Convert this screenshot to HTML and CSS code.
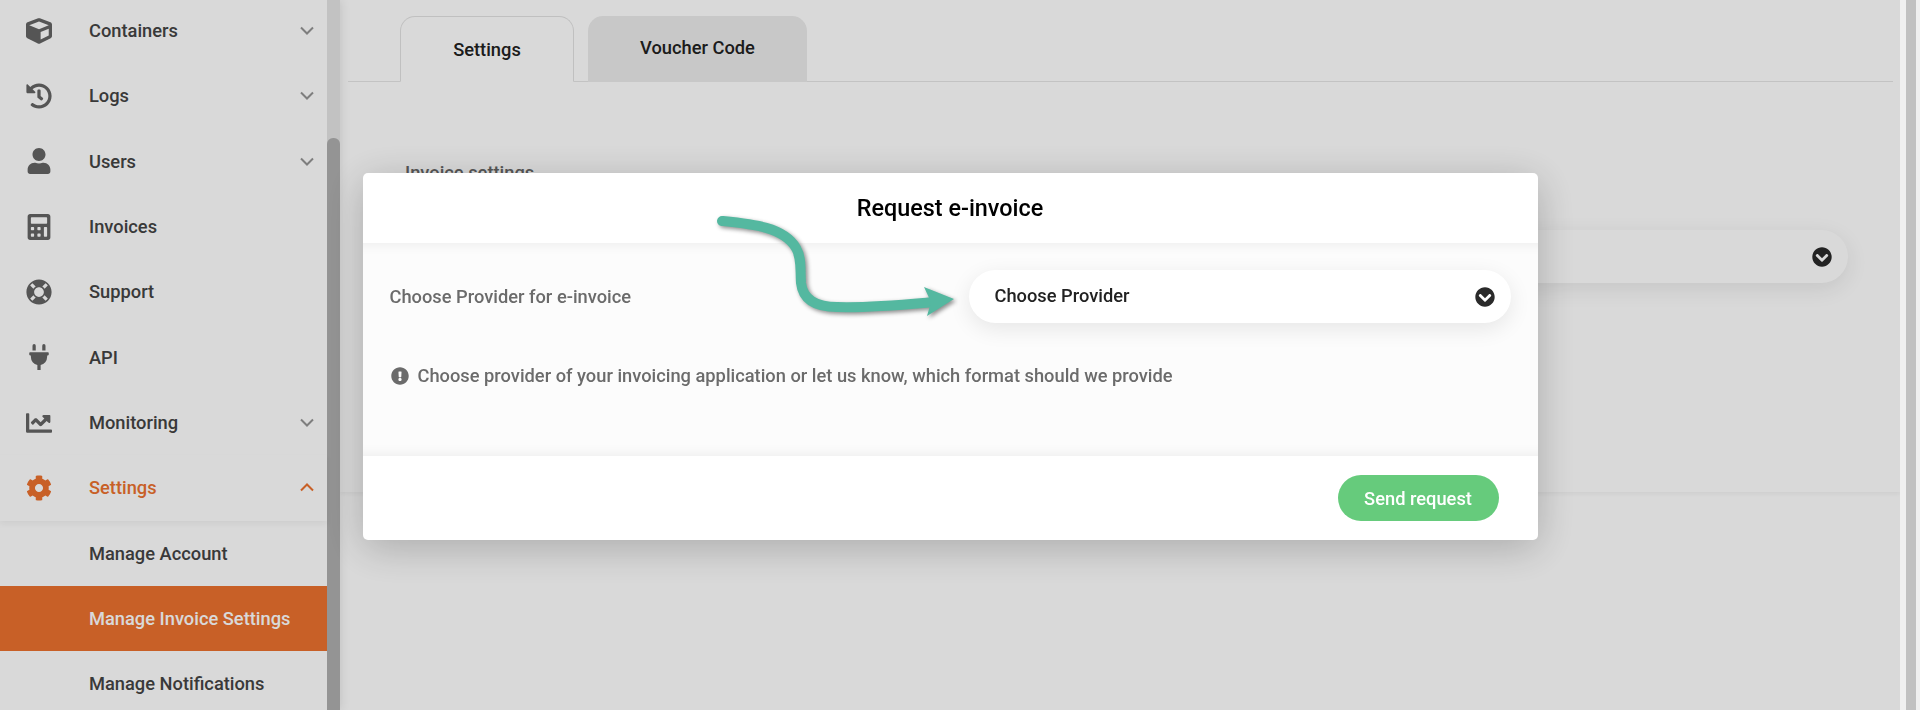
FILE: index.html
```html
<!DOCTYPE html>
<html lang="en">
<head>
<meta charset="utf-8">
<title>Request e-invoice</title>
<link rel="stylesheet" href="styles.css">
</head>
<body>
<div class="app">
  <aside class="sidebar">
    <nav class="nav">
      <a class="nav-item"><svg class="nav-icon" viewBox="0 0 512 512"><path d="M239.1 6.3l-208 78c-18.7 7-31.1 25-31.1 45v225.1c0 18.2 10.3 34.8 26.5 42.9l208 104c13.5 6.8 29.4 6.8 42.9 0l208-104c16.3-8.1 26.5-24.8 26.5-42.9V129.3c0-20-12.4-37.9-31.1-44.9l-208-78C262 2.2 250 2.2 239.1 6.3zM256 68.4l192 72v1.1l-192 78-192-78v-1.1l192-72zm32 356V275.5l160-65v133.9l-160 80z"/></svg><span class="nav-label">Containers</span><svg class="chev" viewBox="0 0 14 9"><path d="M1 1.5l6 6 6-6"/></svg></a>
      <a class="nav-item"><svg class="nav-icon" viewBox="0 0 512 512"><path d="M504 255.531c.253 136.64-111.18 248.372-247.82 248.468-59.015.042-113.223-20.53-155.822-54.911-11.077-8.94-11.905-25.541-1.839-35.607l11.267-11.267c8.609-8.609 22.353-9.551 31.891-1.984C173.062 425.135 212.781 440 256 440c101.705 0 184-82.311 184-184 0-101.705-82.311-184-184-184-48.814 0-93.149 18.969-126.068 49.932l50.754 50.754c10.08 10.08 2.941 27.314-11.313 27.314H24c-8.837 0-16-7.163-16-16V38.627c0-14.254 17.234-21.393 27.314-11.314l49.372 49.372C129.209 34.136 189.552 8 256 8c136.81 0 247.747 110.78 248 247.531zm-180.912 78.784l9.823-12.63c8.138-10.463 6.253-25.542-4.21-33.679L288 256.349V152c0-13.255-10.745-24-24-24h-16c-13.255 0-24 10.745-24 24v135.651l65.409 50.874c10.463 8.137 25.541 6.253 33.679-4.21z"/></svg><span class="nav-label">Logs</span><svg class="chev" viewBox="0 0 14 9"><path d="M1 1.5l6 6 6-6"/></svg></a>
      <a class="nav-item"><svg class="nav-icon" viewBox="0 0 448 512"><path d="M224 256c70.7 0 128-57.3 128-128S294.7 0 224 0 96 57.3 96 128s57.3 128 128 128zm89.6 32h-16.7c-22.2 10.2-46.9 16-72.9 16s-50.6-5.8-72.9-16h-16.7C60.2 288 0 348.2 0 422.4V464c0 26.5 21.5 48 48 48h352c26.5 0 48-21.5 48-48v-41.6c0-74.2-60.2-134.4-134.4-134.4z"/></svg><span class="nav-label">Users</span><svg class="chev" viewBox="0 0 14 9"><path d="M1 1.5l6 6 6-6"/></svg></a>
      <a class="nav-item"><svg class="nav-icon" viewBox="0 0 448 512"><path d="M400 0H48C22.4 0 0 22.4 0 48v416c0 25.6 22.4 48 48 48h352c25.6 0 48-22.4 48-48V48c0-25.6-22.4-48-48-48zM128 435.2c0 6.4-6.4 12.8-12.8 12.8H76.8c-6.4 0-12.8-6.4-12.8-12.8v-38.4c0-6.4 6.4-12.8 12.8-12.8h38.4c6.4 0 12.8 6.4 12.8 12.8v38.4zm0-128c0 6.4-6.4 12.8-12.8 12.8H76.8c-6.4 0-12.8-6.4-12.8-12.8v-38.4c0-6.4 6.4-12.8 12.8-12.8h38.4c6.4 0 12.8 6.4 12.8 12.8v38.4zm128 128c0 6.4-6.4 12.8-12.8 12.8h-38.4c-6.4 0-12.8-6.4-12.8-12.8v-38.4c0-6.4 6.4-12.8 12.8-12.8h38.4c6.4 0 12.8 6.4 12.8 12.8v38.4zm0-128c0 6.4-6.4 12.8-12.8 12.8h-38.4c-6.4 0-12.8-6.4-12.8-12.8v-38.4c0-6.4 6.4-12.8 12.8-12.8h38.4c6.4 0 12.8 6.4 12.8 12.8v38.4zm128 128c0 6.4-6.4 12.8-12.8 12.8h-38.4c-6.4 0-12.8-6.4-12.8-12.8V268.8c0-6.4 6.4-12.8 12.8-12.8h38.4c6.4 0 12.8 6.4 12.8 12.8v166.4zm0-256c0 6.4-6.4 12.8-12.8 12.8H76.8c-6.4 0-12.8-6.4-12.8-12.8V76.8C64 70.4 70.4 64 76.8 64h294.4c6.4 0 12.8 6.4 12.8 12.8v102.4z"/></svg><span class="nav-label">Invoices</span></a>
      <a class="nav-item"><svg class="nav-icon" viewBox="0 0 512 512"><path d="M256 8C119.033 8 8 119.033 8 256s111.033 248 248 248 248-111.033 248-248S392.967 8 256 8zm173.696 119.559l-63.399 63.399c-10.987-18.559-26.67-34.252-45.255-45.255l63.399-63.399a218.396 218.396 0 0 1 45.255 45.255zM256 352c-53.019 0-96-42.981-96-96s42.981-96 96-96 96 42.981 96 96-42.981 96-96 96zM127.559 82.304l63.399 63.399c-18.559 10.987-34.252 26.67-45.255 45.255l-63.399-63.399a218.372 218.372 0 0 1 45.255-45.255zM82.304 384.441l63.399-63.399c10.987 18.559 26.67 34.252 45.255 45.255l-63.399 63.399a218.396 218.396 0 0 1-45.255-45.255zm302.137 45.255l-63.399-63.399c18.559-10.987 34.252-26.67 45.255-45.255l63.399 63.399a218.403 218.403 0 0 1-45.255 45.255z"/></svg><span class="nav-label">Support</span></a>
      <a class="nav-item"><svg class="nav-icon" viewBox="0 0 384 512"><path d="M320,32a32,32,0,0,0-64,0v96h64Zm48,128H16A16,16,0,0,0,0,176v32a16,16,0,0,0,16,16H32v32A160.07,160.07,0,0,0,160,412.8V512h64V412.8A160.07,160.07,0,0,0,352,256V224h16a16,16,0,0,0,16-16V176A16,16,0,0,0,368,160ZM128,32a32,32,0,0,0-64,0v96h64Z"/></svg><span class="nav-label">API</span></a>
      <a class="nav-item"><svg class="nav-icon" viewBox="0 0 512 512"><path d="M496 384H64V80c0-8.84-7.16-16-16-16H16C7.16 64 0 71.16 0 80v336c0 17.67 14.33 32 32 32h464c8.84 0 16-7.16 16-16v-32c0-8.84-7.16-16-16-16zM464 96H345.94c-21.38 0-32.09 25.85-16.97 40.97l32.4 32.4L288 242.75l-73.37-73.37c-12.5-12.5-32.76-12.5-45.25 0l-68.69 68.69c-6.25 6.25-6.25 16.38 0 22.63l22.62 22.62c6.25 6.25 16.38 6.25 22.63 0L192 237.25l73.37 73.37c12.5 12.5 32.76 12.5 45.25 0l96-96 32.4 32.4c15.12 15.12 40.97 4.41 40.97-16.97V112c.01-8.84-7.15-16-15.99-16z"/></svg><span class="nav-label">Monitoring</span><svg class="chev" viewBox="0 0 14 9"><path d="M1 1.5l6 6 6-6"/></svg></a>
      <a class="nav-item nav-open"><svg class="nav-icon" viewBox="0 0 512 512"><path d="M487.4 315.7l-42.6-24.6c4.3-23.2 4.3-47 0-70.2l42.6-24.6c4.9-2.8 7.1-8.6 5.5-14-11.1-35.6-30-67.8-54.7-94.6-3.8-4.1-10-5.1-14.8-2.3L380.8 110c-17.9-15.4-38.5-27.3-60.8-35.1V25.8c0-5.6-3.9-10.5-9.4-11.7-36.7-8.2-74.3-7.8-109.2 0-5.5 1.2-9.4 6.1-9.4 11.7V75c-22.2 7.9-42.8 19.8-60.8 35.1L88.7 85.5c-4.9-2.8-11-1.9-14.8 2.3-24.7 26.7-43.6 58.9-54.7 94.6-1.7 5.4.6 11.2 5.5 14L67.3 221c-4.3 23.2-4.3 47 0 70.2l-42.6 24.6c-4.9 2.8-7.1 8.6-5.5 14 11.1 35.6 30 67.8 54.7 94.6 3.8 4.1 10 5.1 14.8 2.3l42.6-24.6c17.9 15.4 38.5 27.3 60.8 35.1v49.2c0 5.6 3.9 10.5 9.4 11.7 36.7 8.2 74.3 7.8 109.2 0 5.5-1.2 9.4-6.1 9.4-11.7v-49.2c22.2-7.9 42.8-19.8 60.8-35.1l42.6 24.6c4.9 2.8 11 1.9 14.8-2.3 24.7-26.7 43.6-58.9 54.7-94.6 1.5-5.5-.7-11.3-5.6-14.1zM256 336c-44.1 0-80-35.9-80-80s35.9-80 80-80 80 35.9 80 80-35.9 80-80 80z"/></svg><span class="nav-label">Settings</span><svg class="chev" viewBox="0 0 14 9"><path d="M1 7.5l6-6 6 6"/></svg></a>
      <a class="nav-item"><span class="nav-label nav-sub">Manage Account</span></a>
      <a class="nav-item nav-active"><span class="nav-label nav-sub">Manage Invoice Settings</span></a>
      <a class="nav-item"><span class="nav-label nav-sub">Manage Notifications</span></a>
    </nav>
    <div class="rail"><div class="thumb"></div></div>
  </aside>
  <main class="main">
    <section class="panel">
      <div class="tabs">
        <div class="tab tab-on">Settings</div>
        <div class="tab tab-off">Voucher Code</div>
      </div>
      <h2 class="panel-title">Invoice settings</h2>
      <div class="select select-bg"><span></span><svg class="circle-chev" viewBox="0 0 512 512"><path d="M504 256c0 137-111 248-248 248S8 393 8 256 119 8 256 8s248 111 248 248zM273 369.9l135.5-135.5c9.4-9.4 9.4-24.6 0-33.9l-17-17c-9.4-9.4-24.6-9.4-33.9 0L256 285.1 154.4 183.5c-9.4-9.4-24.6-9.4-33.9 0l-17 17c-9.4 9.4-9.4 24.6 0 33.9L239 369.9c9.4 9.4 24.6 9.4 34 0z"/></svg></div>
    </section>
  </main>
  <div class="page-scroll"><div class="page-thumb"></div></div>
</div>
<div class="overlay">
  <div class="modal">
    <header class="modal-head">Request e-invoice</header>
    <div class="modal-body">
      <div class="field">
        <label class="field-label">Choose Provider for e-invoice</label>
        <div class="select select-modal"><span>Choose Provider</span><svg class="circle-chev" viewBox="0 0 512 512"><path d="M504 256c0 137-111 248-248 248S8 393 8 256 119 8 256 8s248 111 248 248zM273 369.9l135.5-135.5c9.4-9.4 9.4-24.6 0-33.9l-17-17c-9.4-9.4-24.6-9.4-33.9 0L256 285.1 154.4 183.5c-9.4-9.4-24.6-9.4-33.9 0l-17 17c-9.4 9.4-9.4 24.6 0 33.9L239 369.9c9.4 9.4 24.6 9.4 34 0z"/></svg></div>
      </div>
      <p class="note"><svg class="note-icon" viewBox="0 0 512 512"><path d="M504 256c0 136.997-111.043 248-248 248S8 392.997 8 256C8 119.083 119.043 8 256 8s248 111.083 248 248zm-248 50c-25.405 0-46 20.595-46 46s20.595 46 46 46 46-20.595 46-46-20.595-46-46-46zm-43.673-165.346l7.418 136c.347 6.364 5.609 11.346 11.982 11.346h48.546c6.373 0 11.635-4.982 11.982-11.346l7.418-136c.375-6.874-5.098-12.654-11.982-12.654h-63.383c-6.884 0-12.356 5.78-11.981 12.654z"/></svg>Choose provider of your invoicing application or let us know, which format should we provide</p>
    </div>
    <footer class="modal-foot"><button class="send">Send request</button></footer>
  </div>
  <svg class="arrow" viewBox="0 0 260 120">
    <path class="arrow-line" d="M12 11C42 14 74 17 86 38C92 48 90 60 91 73C93 90 106 97 127 97C160 98 190 95 224 92"/>
    <path class="arrow-head" d="M244 89L214 77L221 92L217 106Z"/>
  </svg>
</div>
</body>
</html>
```
FILE: styles.css
```css
* { box-sizing: border-box; }
html, body { margin: 0; height: 710px; overflow: hidden; }
body { font-family: Roboto, "Liberation Sans", sans-serif; font-weight: 500; background: #fff; color: #444; }

.app { display: flex; height: 710px; overflow: hidden; }

.sidebar { flex: 0 0 340px; display: flex; height: 710px; box-shadow: 0 0 10px rgba(0,0,0,.12); position: relative; }
.nav { flex: 0 0 327px; display: grid; grid-auto-rows: 65.33px; margin-top: -2px; align-content: start; }
.nav-item { display: flex; align-items: center; padding-left: 26px; padding-right: 13px; font-size: 18.3px; color: #444; }
.nav-icon { width: 26px; height: 26px; fill: #646464; flex: none; }
.nav-label { margin-left: 37px; flex: 1; }
.nav-sub { margin-left: 63px; }
.chev { width: 14px; height: 9px; fill: none; stroke: #959595; stroke-width: 2; flex: none; }
.nav-open { color: #ec712e; box-shadow: 0 3px 6px rgba(0,0,0,.05); position: relative; }
.nav-open .nav-icon { fill: #ec712e; }
.nav-open .chev { stroke: #ec712e; }
.nav-active { background: #ec712e; color: #fff; }

.rail { flex: 0 0 13px; background: #e4e4e4; padding-top: 138px; }
.thumb { height: 600px; background: #aeaeae; border-radius: 6px 6px 0 0; }

.main { flex: 1; min-width: 0; }
.panel { height: 492px; padding: 16px 7px 0 8px; box-shadow: 0 2px 4px rgba(0,0,0,.05); }
.tabs { display: flex; gap: 14px; padding-left: 52px; height: 66px; border-bottom: 1px solid #e6e6e6; }
.tab { height: 66px; border-radius: 15px 15px 0 0; font-size: 18.3px; color: #222; display: flex; align-items: center; justify-content: center; }
.tab-on { width: 174px; background: #fff; border: 1px solid #e2e2e2; border-bottom-color: #fff; }
.tab-off { width: 219px; background: #ececec; border-bottom: 1px solid #ececec; padding-bottom: 2px; }
.panel-title { margin: 81px 0 0 57px; font-size: 18.3px; line-height: 20px; font-weight: 500; color: #666; }
.select { display: flex; align-items: center; justify-content: space-between; height: 53px; border-radius: 27px; background: #fff; box-shadow: 0 6px 22px rgba(0,0,0,.09); }
.select-bg { margin: 47px 45px 0 600px; padding-right: 16px; }
.circle-chev { width: 20px; height: 20px; fill: #2a2a2a; flex: none; }

.page-scroll { flex: 0 0 20px; background: #f0f0f0; padding: 0 4px 0 6px; }
.page-thumb { height: 100%; background: #c1c1c1; }

.overlay { position: fixed; inset: 0 20px 0 0; background: rgba(0,0,0,.15); display: flex; justify-content: center; align-items: flex-start; padding-top: 173px; }
.modal { width: 1175px; height: 367px; background: #fff; border-radius: 5px; box-shadow: 0 8px 40px rgba(0,0,0,.22); display: flex; flex-direction: column; overflow: hidden; }
.modal-head { flex: 0 0 70px; display: flex; align-items: center; justify-content: center; font-size: 23.4px; color: #000; }
.modal-body { flex: 0 0 213px; padding: 27px 27px 0 27px; background: #fcfcfc; box-shadow: inset 0 14px 14px -14px rgba(0,0,0,.08), inset 0 -14px 14px -14px rgba(0,0,0,.08); }
.field { display: flex; align-items: center; justify-content: space-between; }
.field-label { font-size: 18.3px; color: #6b6b6b; }
.select-modal { width: 542px; padding: 0 16px 0 26px; font-size: 18.3px; color: #222; box-shadow: 0 6px 22px rgba(0,0,0,.09); }
.select-modal span { padding-bottom: 2px; }
.note { margin: 44px 0 0; padding-left: 1px; display: flex; align-items: center; gap: 9px; font-size: 18.3px; line-height: 18px; color: #6b6b6b; }
.note-icon { width: 18px; height: 18px; fill: #6b6b6b; flex: none; }
.modal-foot { flex: 1; display: flex; align-items: center; justify-content: flex-end; padding-right: 39px; }
.send { width: 161px; height: 46px; border: 0; border-radius: 23px; background: #66cb7c; color: #fff; font: 500 18.3px Roboto, "Liberation Sans", sans-serif; }

.arrow { position: absolute; left: 710px; top: 210px; width: 260px; height: 120px; overflow: visible; filter: drop-shadow(2px 2px 2px rgba(0,0,0,.45)); }
.arrow-line { fill: none; stroke: #54b8a0; stroke-width: 10; stroke-linecap: round; }
.arrow-head { fill: #54b8a0; }
```
